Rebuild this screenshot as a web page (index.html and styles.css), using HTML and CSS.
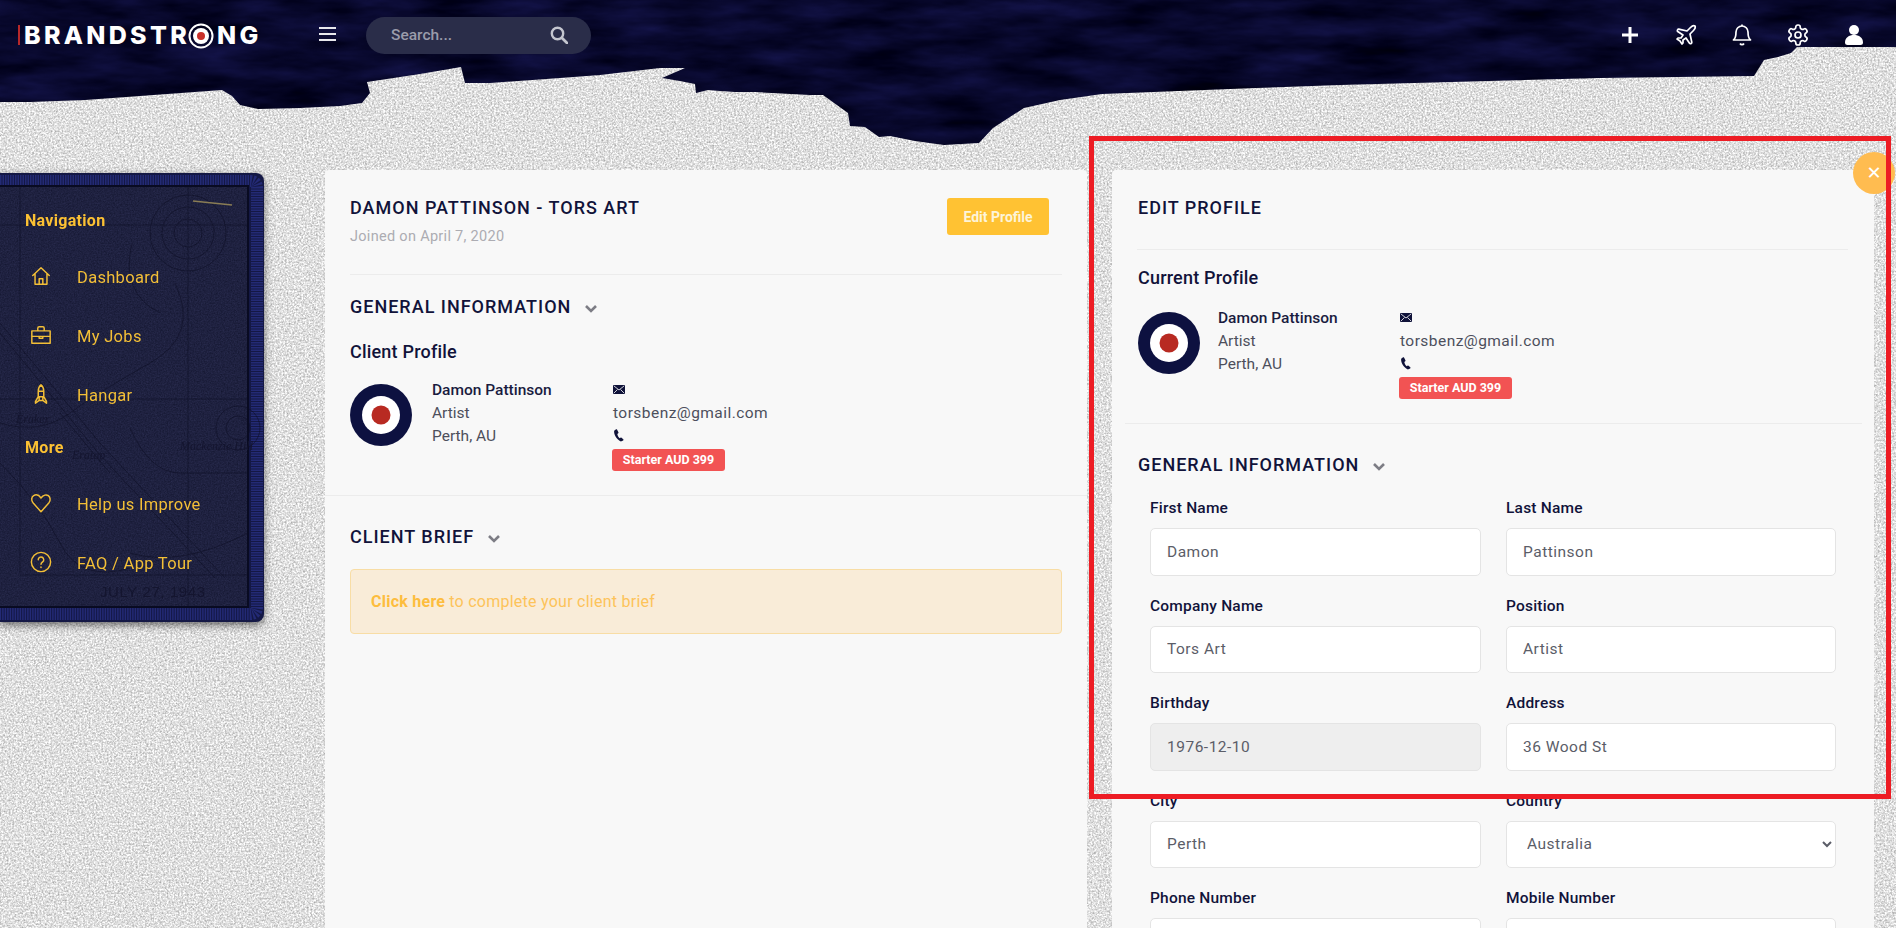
FILE: index.html
```html
<!DOCTYPE html>
<html lang="en">
<head>
<meta charset="utf-8">
<title>Edit Profile</title>
<link rel="stylesheet" href="styles.css">
</head>
<body>
<svg class="backdrop" width="1896" height="928" viewBox="0 0 1896 928" aria-hidden="true">
  <defs>
    <filter id="paper" x="0" y="0" width="100%" height="100%" color-interpolation-filters="sRGB">
      <feTurbulence type="fractalNoise" baseFrequency="0.55" numOctaves="4" seed="8"/>
      <feColorMatrix type="matrix" values="0.55 0 0 0 0.6  0.55 0 0 0 0.6  0.55 0 0 0 0.6  0 0 0 0 1"/>
    </filter>
    <filter id="navy" x="0" y="0" width="100%" height="100%" color-interpolation-filters="sRGB">
      <feTurbulence type="fractalNoise" baseFrequency="0.012 0.05" numOctaves="4" seed="21"/>
      <feColorMatrix type="matrix" values="0.12 0 0 0 -0.03  0.12 0 0 0 -0.03  0.3 0 0 0 0.02  0 0 0 0 1"/>
    </filter>
    <clipPath id="tear">
      <polygon points="0,0 1896,0 1896,47 1797,47 1791,53 1778,57 1764,60 1754,76 1600,78 1340,85 1256,88 1102,94 1060,100 1024,108 993,128 979,143 944,145 915,141 890,136 879,137 865,127 850,126 848,113 823,95 810,95 755,92 735,92 720,91 708,90 696,93 695,84 680,81 662,78 685,68 660,68 600,75 560,78 490,83 465,83 461,67 420,74 367,82 370,93 362,103 340,106 300,108 258,109 240,105 232,96 222,90 140,96 85,100 30,102 0,102"/>
    </clipPath>
  </defs>
  <rect class="paper" width="1896" height="928" filter="url(#paper)"/>
  <g clip-path="url(#tear)">
    <rect width="1896" height="150" filter="url(#navy)"/>
  </g>
</svg>

<header class="topbar">
  <a class="logo">
    <span class="logo-bar"></span>
    <span class="logo-text">BRANDSTR</span>
    <svg class="logo-o" viewBox="0 0 26 26"><circle cx="13" cy="13" r="11.5" fill="none" stroke="#fff" stroke-width="2"/><circle cx="13" cy="13" r="8" fill="#fff"/><circle cx="13" cy="13" r="4" fill="#c8302a"/></svg>
    <span class="logo-text">NG</span>
  </a>
  <span class="burger"><i></i><i></i><i></i></span>
  <div class="search">
    <span>Search...</span>
    <svg class="search-icon" viewBox="0 0 18 18"><circle cx="7.5" cy="7.5" r="5.7" fill="none" stroke="#c4c6cf" stroke-width="2.4"/><path d="M12 12l5 5" stroke="#c4c6cf" stroke-width="2.8" stroke-linecap="round"/></svg>
  </div>
  <nav class="actions">
    <span class="act"><svg viewBox="0 0 24 24"><path d="M12 4v16M4 12h16" fill="none" stroke="#fff" stroke-width="3"/></svg></span>
    <span class="act"><svg viewBox="0 0 24 24" fill="none" stroke="#fff" stroke-width="1.7" stroke-linejoin="round"><path d="M17.8 19.2 16 11l3.5-3.5C21 6 21.5 4 21 3c-1-.5-3 0-4.5 1.5L13 8 4.8 6.2c-.5-.1-.9.1-1.1.5l-.3.5c-.2.5-.1 1 .3 1.3L9 12l-2 3H4l-1 1 3 2 2 3 1-1v-3l3-2 3.5 5.3c.3.4.8.5 1.3.3l.5-.2c.4-.3.6-.7.5-1.2z"/></svg></span>
    <span class="act"><svg viewBox="0 0 24 24" fill="none" stroke="#fff" stroke-width="1.7" stroke-linejoin="round"><path d="M6 9a6 6 0 0 1 12 0c0 6 2.500 8 2.500 8h-17S6 15 6 9"/><path d="M10 20.500a2.300 2.300 0 0 0 4 0"/><path d="M12 3V1.500"/></svg></span>
    <span class="act"><svg viewBox="0 0 24 24" fill="none" stroke="#fff" stroke-width="1.7" stroke-linejoin="round"><path d="M12.220 2h-.44a2 2 0 0 0-2 2v.18a2 2 0 0 1-1 1.730l-.43.25a2 2 0 0 1-2 0l-.15-.08a2 2 0 0 0-2.730.73l-.22.38a2 2 0 0 0 .73 2.730l.15.1a2 2 0 0 1 1 1.720v.51a2 2 0 0 1-1 1.740l-.15.09a2 2 0 0 0-.73 2.730l.22.38a2 2 0 0 0 2.730.73l.15-.08a2 2 0 0 1 2 0l.43.25a2 2 0 0 1 1 1.730V20a2 2 0 0 0 2 2h.44a2 2 0 0 0 2-2v-.18a2 2 0 0 1 1-1.730l.43-.25a2 2 0 0 1 2 0l.15.08a2 2 0 0 0 2.730-.73l.22-.39a2 2 0 0 0-.73-2.730l-.15-.08a2 2 0 0 1-1-1.740v-.5a2 2 0 0 1 1-1.740l.15-.09a2 2 0 0 0 .73-2.730l-.22-.38a2 2 0 0 0-2.730-.73l-.15.08a2 2 0 0 1-2 0l-.43-.25a2 2 0 0 1-1-1.730V4a2 2 0 0 0-2-2z"/><circle cx="12" cy="12" r="3"/></svg></span>
    <span class="act"><svg viewBox="0 0 24 24" fill="#fff"><circle cx="12" cy="7" r="5"/><path d="M3 19.500C3 14.500 7 12 12 12s9 2.500 9 7.500c0 1.700-1 2.500-2.500 2.500h-13C4 22 3 21.200 3 19.500z"/></svg></span>
  </nav>
</header>

<main class="layout">
  <aside class="patch">
    <svg class="patch-art" width="264" height="449" viewBox="0 0 264 449" aria-hidden="true">
      <defs>
        <filter id="leather" x="0" y="0" width="100%" height="100%" color-interpolation-filters="sRGB">
          <feTurbulence type="fractalNoise" baseFrequency="0.7" numOctaves="3" seed="5"/>
          <feColorMatrix type="matrix" values="0.1 0 0 0 0.07  0.1 0 0 0 0.08  0.14 0 0 0 0.18  0 0 0 0 1"/>
        </filter>
      </defs>
      <rect x="-12" y="0" width="276" height="449" rx="8" fill="#141845"/>
      <path d="M-5 8H250Q257 8 257 15V434Q257 441 250 441H-5" fill="none" stroke="#232a75" stroke-width="12" stroke-dasharray="1.500 1"/>
      <rect x="-12" y="13" width="260" height="421" rx="5" filter="url(#leather)"/>
      <path d="M-8 13H248V434H-8" fill="none" stroke="#090b22" stroke-width="2"/>
      <g class="map-lines">
        <path d="M188 13V434M20 13V400M0 52H248M0 226H248M20 402H248"/>
        <path d="M0 150L100 270L225 405M0 160L100 282L215 405M60 240L110 300"/>
        <path d="M0 250Q40 262 70 240T150 190T175 110M132 70Q120 120 160 140"/>
        <path d="M130 255Q150 300 180 300T248 300M0 290Q40 330 60 370T130 395M130 380Q180 395 248 360"/>
        <circle cx="188" cy="60" r="14"/><circle cx="188" cy="60" r="26"/><circle cx="188" cy="60" r="38"/>
        <circle cx="238" cy="255" r="12"/><circle cx="238" cy="255" r="22"/>
      </g>
      <path d="M193 28L232 32" stroke="#8a7d55" stroke-width="1.500"/>
      <text class="map-label" x="16" y="250">Eraker</text>
      <text class="map-label" x="72" y="286">Eratap</text>
      <text class="map-label" x="180" y="277">Mackenzie Hill</text>
      <text class="map-date" x="100" y="284" dy="140">JULY  27, 1943</text>
    </svg>
    <h4 class="nav-title">Navigation</h4>
    <a class="nav-item"><span class="nav-ico"><svg viewBox="0 0 24 24"><path d="M3 11.500L12 3l9 8.500M5.500 9.500V21h13V9.500M10 21v-6h4v6"/></svg></span>Dashboard</a>
    <a class="nav-item"><span class="nav-ico"><svg viewBox="0 0 24 24"><path d="M2 7.500h20V21H2zM8.500 7.500V4.500Q8.500 3 10 3h4q1.500 0 1.500 1.500v3M2 13.500h20M10 13.500v2h4v-2"/></svg></span>My Jobs</a>
    <a class="nav-item"><span class="nav-ico"><svg viewBox="0 0 24 24"><path d="M12 2c2.500 2 3 4 3 7v6l3 5v2l-4-3h-4l-4 3v-2l3-5V9c0-3 .5-5 3-7zM9 9h6M10 19v-4h4v4"/></svg></span>Hangar</a>
    <h4 class="nav-title nav-title-more">More</h4>
    <a class="nav-item"><span class="nav-ico"><svg viewBox="0 0 24 24"><path d="M12 21.500L3.500 12C1 9 1.500 5.500 4 4s5.500-1 8 2.500C14.500 3 18 2.500 20 4s3 5 .5 8z"/></svg></span>Help us Improve</a>
    <a class="nav-item"><span class="nav-ico"><svg viewBox="0 0 24 24"><circle cx="12" cy="12" r="10.500"/><path d="M9 9.500a3 3 0 1 1 4.800 2.400c-1.200.9-1.800 1.400-1.800 2.600M12 17.500v.5"/></svg></span>FAQ / App Tour</a>
  </aside>

  <section class="card card-client">
    <div class="client-head">
      <div>
        <h2 class="heading">DAMON PATTINSON - TORS ART</h2>
        <p class="joined">Joined on April 7, 2020</p>
      </div>
      <button class="edit-btn" type="button">Edit Profile</button>
    </div>
    <h3 class="heading heading-toggle client-general">GENERAL INFORMATION <svg class="chev" viewBox="0 0 14 10"><path d="M2 2l5 5 5-5"/></svg></h3>
    <h3 class="sub">Client Profile</h3>
    <div class="profile profile-client">
      <svg class="avatar" viewBox="0 0 62 62"><circle cx="31" cy="31" r="31" fill="#0d1140"/><circle cx="31" cy="31" r="19" fill="#fff"/><circle cx="31" cy="31" r="9.500" fill="#b82a22"/></svg>
      <div class="who"><strong>Damon Pattinson</strong><span>Artist</span><span>Perth, AU</span></div>
      <div class="contact">
        <span class="c-row"><svg class="mini" viewBox="0 0 12 9"><rect width="12" height="9" rx="1" fill="#10133a"/><path d="M1 1l5 4 5-4M1 8l3.500-3.500M11 8L7.500 4.500" fill="none" stroke="#fff" stroke-width=".8"/></svg></span>
        <span class="c-row">torsbenz@gmail.com</span>
        <span class="c-row"><svg class="mini mini-phone" viewBox="0 0 12 14"><path d="M2.500 .5L.8 1.800C.2 5 3 11 8 13.500l2.500-1.200c.5-.4.500-.8.100-1.200L8.700 9.300c-.4-.3-.8-.3-1.100 0l-.8.700C5.500 9 4.500 7 4.200 5.300l1-.7c.3-.3.3-.7.200-1L4 .8C3.600.3 3 .2 2.500.5z" fill="#10133a"/></svg></span>
        <span class="badge">Starter AUD 399</span>
      </div>
    </div>
    <div class="full-rule"></div>
    <h3 class="heading heading-toggle client-brief">CLIENT BRIEF <svg class="chev" viewBox="0 0 14 10"><path d="M2 2l5 5 5-5"/></svg></h3>
    <div class="notice"><b>Click here</b> to complete your client brief</div>
  </section>

  <section class="card card-edit">
    <a class="close-btn">✕</a>
    <h2 class="heading edit-title">EDIT PROFILE</h2>
    <div class="edit-rule"></div>
    <h3 class="sub edit-sub">Current Profile</h3>
    <div class="profile profile-edit">
      <svg class="avatar" viewBox="0 0 62 62"><circle cx="31" cy="31" r="31" fill="#0d1140"/><circle cx="31" cy="31" r="19" fill="#fff"/><circle cx="31" cy="31" r="9.500" fill="#b82a22"/></svg>
      <div class="who"><strong>Damon Pattinson</strong><span>Artist</span><span>Perth, AU</span></div>
      <div class="contact">
        <span class="c-row"><svg class="mini" viewBox="0 0 12 9"><rect width="12" height="9" rx="1" fill="#10133a"/><path d="M1 1l5 4 5-4M1 8l3.500-3.500M11 8L7.500 4.500" fill="none" stroke="#fff" stroke-width=".8"/></svg></span>
        <span class="c-row">torsbenz@gmail.com</span>
        <span class="c-row"><svg class="mini mini-phone" viewBox="0 0 12 14"><path d="M2.500 .5L.8 1.800C.2 5 3 11 8 13.500l2.500-1.200c.5-.4.500-.8.100-1.200L8.700 9.300c-.4-.3-.8-.3-1.100 0l-.8.700C5.500 9 4.500 7 4.200 5.300l1-.7c.3-.3.3-.7.200-1L4 .8C3.600.3 3 .2 2.500.5z" fill="#10133a"/></svg></span>
        <span class="badge">Starter AUD 399</span>
      </div>
    </div>
    <div class="edit-rule-wide"></div>
    <h3 class="heading heading-toggle edit-general">GENERAL INFORMATION <svg class="chev" viewBox="0 0 14 10"><path d="M2 2l5 5 5-5"/></svg></h3>
    <form class="form-grid">
      <label class="field"><span>First Name</span><input type="text" value="Damon" readonly></label>
      <label class="field"><span>Last Name</span><input type="text" value="Pattinson" readonly></label>
      <label class="field"><span>Company Name</span><input type="text" value="Tors Art" readonly></label>
      <label class="field"><span>Position</span><input type="text" value="Artist" readonly></label>
      <label class="field"><span>Birthday</span><input class="is-disabled" type="text" value="1976-12-10" readonly></label>
      <label class="field"><span>Address</span><input type="text" value="36 Wood St" readonly></label>
      <label class="field"><span>City</span><input type="text" value="Perth" readonly></label>
      <label class="field"><span>Country</span><select><option>Australia</option></select></label>
      <label class="field"><span>Phone Number</span><input type="text" readonly></label>
      <label class="field"><span>Mobile Number</span><input type="text" readonly></label>
    </form>
  </section>
</main>
<div class="annotation"></div>
</body>
</html>
```

FILE: styles.css
```css
* { box-sizing: border-box; }
html, body { margin: 0; padding: 0; }
body {
  position: relative;
  width: 1896px;
  height: 928px;
  overflow: hidden;
  background: #e0e0e0;
  font-family: Roboto, "Liberation Sans", sans-serif;
  color: #4d4f5c;
  font-size: 15.500px;
}
.backdrop { position: absolute; left: 0; top: 0; }

.topbar {
  position: relative;
  display: flex;
  align-items: center;
  height: 70px;
  padding: 0 27px 0 18px;
}
.logo {
  display: flex;
  align-items: center;
  width: 264px;
  height: 26px;
  flex: none;
}
.logo-bar { width: 2px; height: 20px; background: #b8282a; margin-right: 4px; }
.logo-text {
  font-family: Inter, sans-serif;
  font-weight: 800;
  font-size: 25px;
  line-height: 26px;
  letter-spacing: 3.300px;
  color: #fff;
}
.logo-o { width: 26px; height: 26px; margin: 2px 3px 0 -2px; flex: none; }
.burger { display: flex; flex-direction: column; gap: 4px; width: 17px; margin-left: 37px; margin-top: -3px; }
.burger i { display: block; height: 2px; background: #e8e8ec; }
.search {
  display: flex;
  align-items: center;
  justify-content: space-between;
  width: 225px;
  height: 37px;
  margin-left: 30px;
  padding: 0 23px 0 25px;
  border-radius: 19px;
  background: #2a2d49;
  color: #9a9cab;
  font-weight: 500;
  font-size: 15.500px;
}
.search-icon { width: 18px; height: 18px; }
.actions { display: flex; gap: 26px; margin-left: auto; }
.act { width: 30px; height: 30px; display: flex; align-items: center; justify-content: center; }
.act svg { width: 24px; height: 24px; }

.layout {
  display: flex;
  align-items: flex-start;
  position: relative;
  padding-top: 100px;
}
.patch {
  position: relative;
  width: 264px;
  height: 449px;
  margin-top: 3px;
  margin-right: 61px;
  padding: 36px 0 0 25px;
  flex: none;
  filter: drop-shadow(0 3px 4px rgba(0,0,0,.55));
}
.patch-art { position: absolute; left: 0; top: 0; overflow: hidden; }
.map-lines { fill: none; stroke: #0d0e24; stroke-width: 1; opacity: .55; }
.map-label { fill: #14152f; font-family: "Liberation Serif", serif; font-style: italic; font-size: 12px; }
.map-date { fill: #14152f; font-family: "Liberation Sans", sans-serif; font-size: 15px; letter-spacing: .6px; }
.nav-title {
  position: relative;
  margin: 0 0 14.500px;
  font-size: 16px;
  line-height: 24px;
  font-weight: 700;
  color: #fcc133;
  letter-spacing: .3px;
}
.nav-title-more { margin-top: 11.500px; }
.nav-item {
  position: relative;
  display: flex;
  align-items: center;
  height: 59px;
  color: #f3bf37;
  font-size: 16.500px;
  letter-spacing: .3px;
}
.nav-ico { width: 32px; height: 24px; margin-right: 20px; display: flex; justify-content: center; }
.nav-ico svg { width: 22px; height: 22px; fill: none; stroke: #f3bf37; stroke-width: 1.600; stroke-linejoin: round; stroke-linecap: round; }

.card {
  position: relative;
  width: 762px;
  height: 800px;
  flex: none;
  background: #f8f8f8;
  border-radius: 4px 4px 0 0;
}
.card-client { padding: 0 25px; margin-right: 25px; }
.card-edit { padding: 0; }
.client-head {
  display: flex;
  justify-content: space-between;
  align-items: flex-start;
  padding: 26px 13px 26px 0;
  border-bottom: 1px solid #ececec;
}
.heading {
  margin: 0;
  font-size: 18px;
  line-height: 24px;
  font-weight: 500;
  color: #11133a;
  letter-spacing: 1px;
}
.joined { margin: 6px 0 0; line-height: 22px; color: #acacb2; font-size: 14.500px; letter-spacing: .3px; }
.edit-btn {
  height: 37px;
  width: 102px;
  margin-top: 2px;
  border: 0;
  border-radius: 3px;
  background: #ffc233;
  color: #fdf4d8;
  font: 700 14px Roboto, sans-serif;
}
.heading-toggle { display: flex; align-items: center; }
.chev { width: 14px; height: 10px; margin-left: 13px; margin-top: 4px; fill: none; stroke: #7d7d85; stroke-width: 2.600; }
.client-general { margin-top: 20px; }
.sub {
  margin: 20px 0 0;
  font-size: 18px;
  line-height: 26px;
  font-weight: 500;
  color: #11133a;
  letter-spacing: .2px;
}
.profile { display: flex; align-items: flex-start; }
.profile-client { padding-top: 14px; }
.avatar { width: 62px; height: 62px; margin-top: 5px; margin-right: 20px; flex: none; }
.who { width: 181px; display: flex; flex-direction: column; line-height: 23px; flex: none; }
.who strong { color: #1a1c40; font-weight: 500; font-size: 15.500px; }
.contact { display: flex; flex-direction: column; align-items: flex-start; }
.c-row { height: 23px; line-height: 23px; display: flex; align-items: center; letter-spacing: .45px; }
.mini { width: 12px; height: 9px; margin-top: -2px; }
.mini-phone { height: 13px; }
.badge {
  display: block;
  width: 113px;
  height: 22px;
  margin: 1px 0 0 -1px;
  border-radius: 3px;
  background: #f25353;
  color: #fff;
  font-size: 12.500px;
  font-weight: 700;
  line-height: 22px;
  text-align: center;
}
.full-rule { height: 1px; margin: 24px -25px 0; background: #ececec; }
.client-brief { margin-top: 29px; }
.notice {
  display: flex;
  align-items: center;
  gap: 4px;
  height: 65px;
  margin-top: 20px;
  padding-left: 20px;
  background: #f9ecd8;
  border: 1px solid #f8dda5;
  border-radius: 4px;
  color: #fdc35a;
  font-size: 16px;
  letter-spacing: .25px;
}
.notice b { font-weight: 700; color: #fdbd3e; }

.close-btn {
  position: absolute;
  right: -21px;
  top: -18px;
  width: 42px;
  height: 42px;
  border-radius: 50%;
  background: #ffbc50;
  color: #fff;
  font: 700 18px/42px "DejaVu Sans", sans-serif;
  text-align: center;
}
.edit-title { padding: 26px 0 0 26px; }
.edit-rule { height: 1px; margin: 29px 26px 0 25px; background: #ececec; }
.edit-sub { margin: 15px 0 0 26px; }
.profile-edit { padding: 15.500px 0 0 26px; }
.profile-edit .avatar { margin-top: 5.500px; margin-right: 18px; }
.profile-edit .who { width: 182px; }
.edit-rule-wide { height: 1px; margin: 24.500px 12px 0 13px; background: #ececec; }
.edit-general { margin: 29px 0 0 26px; }
.form-grid {
  display: grid;
  grid-template-columns: 331px 330px;
  column-gap: 25px;
  row-gap: 20px;
  margin: 21px 0 0 38px;
}
.field { display: block; }
.field span {
  display: block;
  height: 20px;
  margin-bottom: 10px;
  line-height: 20px;
  font-size: 15.500px;
  font-weight: 500;
  color: #11133a;
  letter-spacing: .2px;
}
.field input, .field select {
  display: block;
  width: 100%;
  height: 47.500px;
  padding: 0 16px;
  border: 1px solid #e4e4e4;
  border-radius: 5px;
  background: #fff;
  color: #5b5d68;
  font: 400 15.500px Roboto, sans-serif;
  letter-spacing: .5px;
  outline: none;
}
.field input.is-disabled { background: #eeeeee; }

.annotation {
  position: absolute;
  left: 1089px;
  top: 136px;
  width: 802px;
  height: 663px;
  border: 5px solid #ed1c24;
  pointer-events: none;
}
```
